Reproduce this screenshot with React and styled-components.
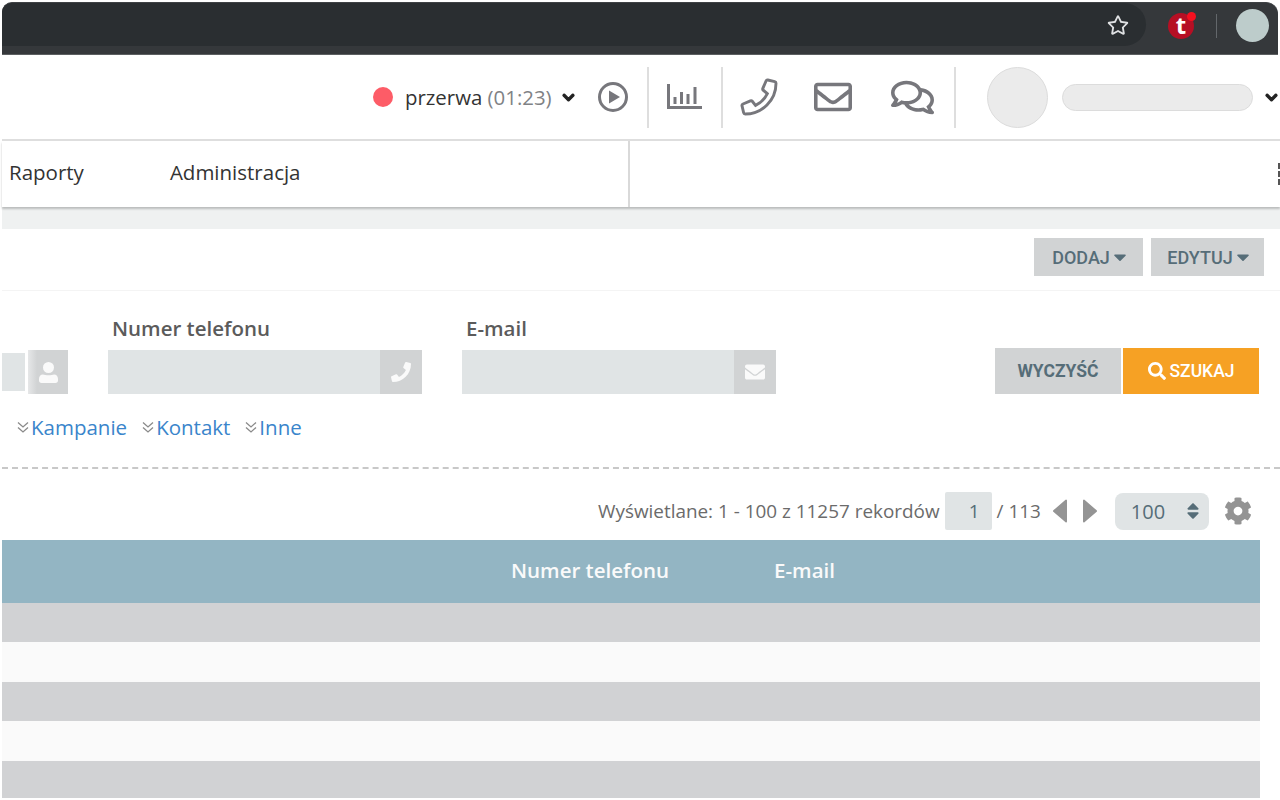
import React from 'react';
import styled, { createGlobalStyle } from 'styled-components';
import { FaRegStar, FaPhone, FaRegEnvelope, FaRegComments, FaChevronDown, FaCaretDown, FaEnvelope, FaSearch, FaCog, FaSort } from 'react-icons/fa';

const GlobalStyle = createGlobalStyle`
  html, body {
    margin: 0;
    padding: 0;
    height: 800px;
    overflow: hidden;
    background: #fff;
    font-family: "Open Sans", "Liberation Sans", sans-serif;
  }
  * { box-sizing: border-box; }
`;

const Page = styled.div`
  width: 1280px;
  height: 800px;
  padding: 2px 0 0 2px;
  overflow: hidden;
`;

const Chrome = styled.div`
  width: 1276px;
  height: 53px;
  padding-top: 2px;
  background: #35383b;
  border-top: 1px solid #3f4245;
  border-bottom: 1px solid #5c5f61;
  border-radius: 10px 12px 0 0;
  display: flex;
  align-items: flex-start;
  overflow: hidden;
`;

const Omnibox = styled.div`
  width: 1144px;
  height: 43px;
  margin-top: -2px;
  padding-right: 17px;
  background: #2a2e31;
  border-radius: 0 22px 22px 0;
  display: flex;
  align-items: center;
  justify-content: flex-end;
  color: #dfe1e3;
  font-size: 22px;
`;

const Extension = styled.div`
  position: relative;
  width: 26px;
  height: 26px;
  margin: 8px 0 0 22px;
  border-radius: 50%;
  background: #b60f24;
  color: #fff;
  font: 700 24px/24px "Open Sans", sans-serif;
  text-align: center;
`;

const ExtensionBadge = styled.span`
  position: absolute;
  top: -1px;
  right: -2px;
  width: 9px;
  height: 9px;
  border-radius: 50%;
  background: #f5101f;
`;

const ChromeDivider = styled.div`
  width: 1px;
  height: 24px;
  margin: 9px 0 0 22px;
  background: #63676b;
`;

const ChromeAvatar = styled.div`
  width: 33px;
  height: 33px;
  margin: 4px 0 0 19px;
  border-radius: 50%;
  background: #bdcccb;
`;

const Header = styled.header`
  height: 86px;
  padding-left: 371px;
  border-bottom: 2px solid #dedede;
  display: flex;
  align-items: center;
  color: #77777c;
`;

const StatusDot = styled.span`
  width: 20px;
  height: 20px;
  border-radius: 50%;
  background: #fd5c67;
`;

const StatusText = styled.span`
  margin-left: 12px;
  font-size: 20.4px;
  color: #333;
  white-space: nowrap;
`;

const StatusTime = styled.span`
  color: #808285;
`;

const Chevron = styled(FaChevronDown)`
  flex: none;
  width: 13px;
  height: 13px;
  margin-left: ${(p) => p.$gap}px;
  color: #222;
  stroke: currentColor;
  stroke-width: 50px;
`;

const HeaderIcon = styled.span`
  flex: none;
  margin-left: ${(p) => p.$gap}px;
  display: flex;
  font-size: ${(p) => p.$size}px;

  svg.outline {
    fill: none;
    stroke: currentColor;
    stroke-width: 44px;
    overflow: visible;
  }
`;

const HeaderDivider = styled.span`
  flex: none;
  width: 2px;
  height: 61px;
  margin-left: ${(p) => p.$gap}px;
  background: #dedede;
`;

const Avatar = styled.span`
  flex: none;
  width: 61px;
  height: 61px;
  margin-left: 31px;
  border: 1px solid #dcdcdc;
  border-radius: 50%;
  background: #ebebeb;
`;

const UserName = styled.span`
  flex: none;
  width: 191px;
  height: 27px;
  margin-left: 14px;
  border: 1px solid #dcdcdc;
  border-radius: 14px;
  background: #ebebeb;
`;

const Nav = styled.nav`
  height: 66px;
  display: flex;
  box-shadow: 0 2px 2px rgba(0, 0, 0, 0.22);
  position: relative;
`;

const NavMain = styled.div`
  width: 628px;
  padding: 0 0 4px 7px;
  border-right: 2px solid #d9d9d9;
  display: flex;
  align-items: center;
  gap: 86px;
  font-size: 20.5px;
  color: #333;
`;

const NavSide = styled.div`
  flex: 1;
  display: flex;
  flex-direction: column;
  align-items: flex-end;
  justify-content: center;
  gap: 2px;
`;

const NavDot = styled.span`
  width: 2px;
  height: 6px;
  background: #555;
`;

const Band = styled.div`
  height: 22px;
  background: #eff1f1;
`;

const ActionBar = styled.div`
  height: 62px;
  padding: 9px 16px 0 0;
  border-bottom: 1px solid #f4f4f4;
  display: flex;
  justify-content: flex-end;
  gap: 8px;
`;

const ActionButton = styled.button`
  width: ${(p) => p.$width}px;
  height: 38px;
  padding: 0 0 0 5px;
  border: 0;
  background: #d1d3d4;
  color: #566d78;
  font: 500 18px "Roboto", sans-serif;
  display: flex;
  align-items: center;
  justify-content: center;

  svg {
    font-size: 20px;
  }
`;

const FilterRow = styled.div`
  height: 103px;
  display: flex;
  align-items: flex-start;
`;

const Field = styled.div`
  margin-left: ${(p) => p.$gap}px;
  padding-top: 24px;
`;

const FieldLabel = styled.div`
  height: 35px;
  padding-left: 4px;
  font-size: 20.5px;
  font-weight: 600;
  line-height: 26px;
  color: #5b5b5b;
`;

const InputGroup = styled.div`
  width: 314px;
  height: 44px;
  background: #e0e4e5;
  display: flex;
  justify-content: flex-end;
`;

const Addon = styled.div`
  width: 42px;
  height: 44px;
  background: #d1d3d4;
  color: #fafafa;
  display: flex;
  align-items: center;
  justify-content: center;
  font-size: 20px;
`;

const ClippedField = styled.div`
  width: 66px;
  margin-top: 59px;
  display: flex;
  align-items: center;
  gap: 3px;
`;

const ClippedInput = styled.div`
  width: 23px;
  height: 38px;
  background: #e0e4e5;
`;

const ClippedAddon = styled(Addon)`
  width: 40px;
  background: linear-gradient(90deg, #e6e7e8 0, #d1d3d4 9px);
`;

const SearchButtons = styled.div`
  margin: 57px 0 0 219px;
  display: flex;
  gap: 2px;
`;

const SearchButton = styled.button`
  width: ${(p) => p.$width}px;
  height: 46px;
  padding: 0;
  border: 0;
  background: ${(p) => (p.$primary ? '#f6a124' : '#d1d3d4')};
  color: ${(p) => (p.$primary ? '#fff' : '#566d78')};
  font: ${(p) => (p.$primary ? 500 : 700)} 17.5px "Roboto", sans-serif;
  display: flex;
  align-items: center;
  justify-content: center;
  gap: 4px;
`;

const Toggles = styled.div`
  height: 75px;
  padding: 20px 0 0 13px;
  border-bottom: 2px dashed #c8c8c8;
  display: flex;
  align-items: flex-start;
  gap: 13px;
`;

const Toggle = styled.a`
  display: flex;
  align-items: center;
  font-size: 20.5px;
  line-height: 27px;
  color: #3a85cb;
`;

const Pager = styled.div`
  height: 71px;
  padding: 13px 0 0 596px;
  display: flex;
  align-items: center;
  font-size: 18.9px;
  color: #6b6b6b;
  white-space: nowrap;
`;

const PageInput = styled.span`
  width: 47px;
  height: 38px;
  margin: 0 5px;
  padding-right: 12px;
  border-radius: 2px;
  background: #e0e4e5;
  text-align: right;
  line-height: 38px;
  color: #566d78;
`;

const PagerArrow = styled.svg`
  width: 14px;
  height: 24px;
  margin-left: ${(p) => p.$gap}px;
  fill: #949494;
  stroke: #949494;
  stroke-width: 2;
  stroke-linejoin: round;
`;

const PageSize = styled.div`
  width: 94px;
  height: 37px;
  margin-left: 18px;
  padding: 0 6px 0 16px;
  border-radius: 8px;
  background: #e0e4e5;
  display: flex;
  align-items: center;
  justify-content: space-between;
  color: #566d78;
  font-size: 20px;
`;

const Gear = styled(FaCog)`
  width: 28px;
  height: 28px;
  margin-left: 15px;
  color: #949494;
`;

const Table = styled.div`
  width: 1258px;
  height: 258px;
  overflow: hidden;
`;

const TableHead = styled.div`
  height: 63px;
  padding-bottom: 3px;
  background: #93b5c3;
  display: flex;
  align-items: center;
  color: #fafafa;
  font-size: 20.5px;
  font-weight: 600;
`;

const HeadCell = styled.span`
  margin-left: ${(p) => p.$gap}px;
`;

const Row = styled.div`
  height: 39.4px;
  background: ${(p) => (p.$dark ? '#d1d2d4' : '#fafafa')};
`;

const PlayIcon = () => (
  <svg width="30" height="30" viewBox="0 0 30 30">
    <circle cx="15" cy="15" r="13.5" fill="none" stroke="currentColor" strokeWidth="3" />
    <path d="M11 8.5 L22 15 L11 21.5 Z" fill="currentColor" />
  </svg>
);

const ChartIcon = () => (
  <svg width="35" height="26" viewBox="0 0 35 26" fill="none" stroke="currentColor" strokeWidth="3">
    <path d="M1.5 0 V23.5 H35" />
    <path d="M8 13 V20 M14.5 8 V20 M21 10 V20 M28 3 V20" />
  </svg>
);

const UserIcon = () => (
  <svg width="19" height="21" viewBox="0 0 19 21" fill="currentColor">
    <circle cx="9.5" cy="5.5" r="5.5" />
    <path d="M4 12.5 C6 13.5 13 13.5 15 12.5 C17.5 12.5 19 14.5 19 17 V18.5 C19 20 18 21 16.5 21 H2.5 C1 21 0 20 0 18.5 V17 C0 14.5 1.5 12.5 4 12.5 Z" />
  </svg>
);

const DoubleChevron = () => (
  <svg width="16" height="14" viewBox="0 0 16 14" fill="none" stroke="#8a8a8a" strokeWidth="1.3">
    <path d="M3 1.5 L8 6 L13 1.5 M3 6.5 L8 11 L13 6.5" />
  </svg>
);

const App = () => {
  const rows = [true, false, true, false, true];

  return (
    <Page>
      <GlobalStyle />
      <Chrome>
        <Omnibox>
          <FaRegStar />
        </Omnibox>
        <Extension>
          t
          <ExtensionBadge />
        </Extension>
        <ChromeDivider />
        <ChromeAvatar />
      </Chrome>

      <Header>
        <StatusDot />
        <StatusText>
          przerwa <StatusTime>(01:23)</StatusTime>
        </StatusText>
        <Chevron $gap={10} />
        <HeaderIcon $gap={23}>
          <PlayIcon />
        </HeaderIcon>
        <HeaderDivider $gap={19} />
        <HeaderIcon $gap={18}>
          <ChartIcon />
        </HeaderIcon>
        <HeaderDivider $gap={19} />
        <HeaderIcon $gap={19} $size={34}>
          <FaPhone className="outline" />
        </HeaderIcon>
        <HeaderIcon $gap={38} $size={38}>
          <FaRegEnvelope />
        </HeaderIcon>
        <HeaderIcon $gap={39} $size={43}>
          <FaRegComments />
        </HeaderIcon>
        <HeaderDivider $gap={20} />
        <Avatar />
        <UserName />
        <Chevron $gap={12} />
      </Header>

      <Nav>
        <NavMain>
          <span>Raporty</span>
          <span>Administracja</span>
        </NavMain>
        <NavSide>
          <NavDot />
          <NavDot />
          <NavDot />
        </NavSide>
      </Nav>
      <Band />

      <ActionBar>
        <ActionButton $width={109}>
          DODAJ <FaCaretDown />
        </ActionButton>
        <ActionButton $width={113}>
          EDYTUJ <FaCaretDown />
        </ActionButton>
      </ActionBar>

      <FilterRow>
        <ClippedField>
          <ClippedInput />
          <ClippedAddon>
            <UserIcon />
          </ClippedAddon>
        </ClippedField>
        <Field $gap={40}>
          <FieldLabel>Numer telefonu</FieldLabel>
          <InputGroup>
            <Addon>
              <FaPhone />
            </Addon>
          </InputGroup>
        </Field>
        <Field $gap={40}>
          <FieldLabel>E-mail</FieldLabel>
          <InputGroup>
            <Addon>
              <FaEnvelope />
            </Addon>
          </InputGroup>
        </Field>
        <SearchButtons>
          <SearchButton $width={126}>WYCZYŚĆ</SearchButton>
          <SearchButton $width={136} $primary>
            <FaSearch size={18} /> SZUKAJ
          </SearchButton>
        </SearchButtons>
      </FilterRow>

      <Toggles>
        <Toggle>
          <DoubleChevron />
          Kampanie
        </Toggle>
        <Toggle>
          <DoubleChevron />
          Kontakt
        </Toggle>
        <Toggle>
          <DoubleChevron />
          Inne
        </Toggle>
      </Toggles>

      <Pager>
        Wyświetlane: 1 - 100 z 11257 rekordów
        <PageInput>1</PageInput>/ 113
        <PagerArrow $gap={12} viewBox="-1 -1 16 26">
          <path d="M14 0 V24 L0 12 Z" />
        </PagerArrow>
        <PagerArrow $gap={16} viewBox="-1 -1 16 26">
          <path d="M0 0 V24 L14 12 Z" />
        </PagerArrow>
        <PageSize>
          100
          <FaSort size={20} />
        </PageSize>
        <Gear />
      </Pager>

      <Table>
        <TableHead>
          <HeadCell $gap={509}>Numer telefonu</HeadCell>
          <HeadCell $gap={105}>E-mail</HeadCell>
        </TableHead>
        {rows.map((dark, i) => (
          <Row key={i} $dark={dark} />
        ))}
      </Table>
    </Page>
  );
};

export default App;
